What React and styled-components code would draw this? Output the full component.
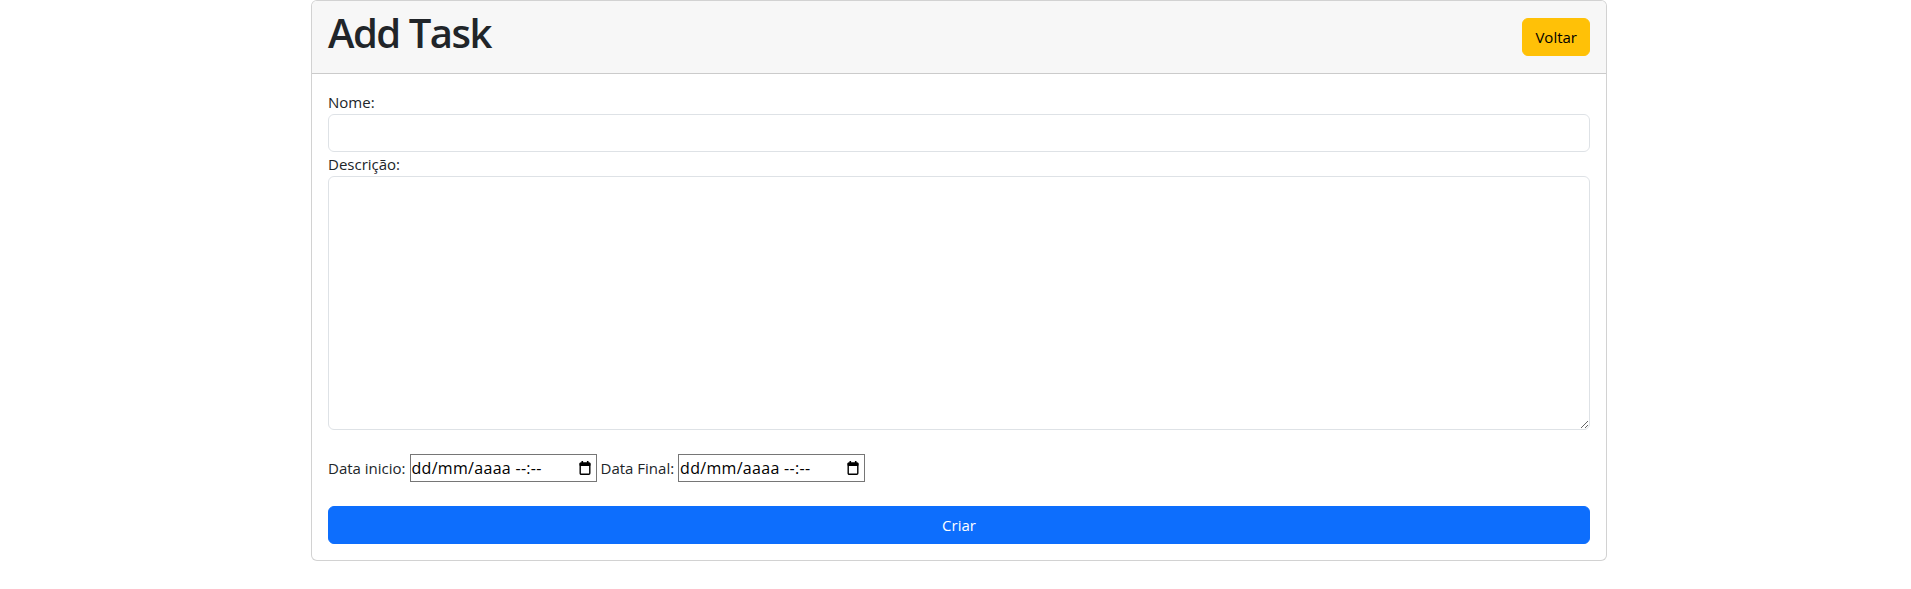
import React from "react"
import styled, { createGlobalStyle } from "styled-components"

const GlobalStyle = createGlobalStyle`
    * { box-sizing: border-box; }
    body {
        margin: 0;
        background: #fff;
        color: #212529;
        font-family: "Open Sans", "Noto Sans", sans-serif;
        font-size: 16px;
        line-height: 1.5;
    }
`

const Page = styled.div`
    display: flex;
    justify-content: center;
    padding-left: 7px;
`

const Card = styled.div`
    width: 1296px;
    border: 1px solid rgba(0, 0, 0, 0.175);
    border-radius: 6px;
    background: #fff;
    overflow: hidden;
`

const CardHeader = styled.div`
    display: flex;
    justify-content: space-between;
    align-items: center;
    padding: 8px 16px;
    background: #f7f7f7;
    border-bottom: 1px solid rgba(0, 0, 0, 0.175);
`

const Title = styled.h1`
    margin: 0 0 8px;
    font-size: 40px;
    font-weight: 600;
    line-height: 48px;
    letter-spacing: -1.5px;
`

const CardBody = styled.form`
    display: flex;
    flex-direction: column;
    padding: 16px;
`

const Label = styled.label`
    display: block;
    font-size: 15px;
    line-height: 24px;
`

const TextInput = styled.input`
    display: block;
    width: 100%;
    height: 38px;
    padding: 6px 12px;
    font: inherit;
    color: #212529;
    border: 1px solid #dee2e6;
    border-radius: 6px;
    outline: none;
`

const TextArea = styled.textarea`
    display: block;
    width: 100%;
    height: 254px;
    padding: 6px 12px;
    font: inherit;
    color: #212529;
    border: 1px solid #dee2e6;
    border-radius: 6px;
    outline: none;
`

const DateRow = styled.div`
    display: flex;
    align-items: center;
    gap: 4px;
    margin-top: 24px;
    font-size: 15px;
    line-height: 24px;
`

const DateBox = styled.div`
    display: flex;
    align-items: center;
    justify-content: space-between;
    width: 187px;
    height: 28px;
    padding: 0 5px 0 1px;
    border: 1px solid #767676;
    color: #000;
    font-size: 16px;
    letter-spacing: 0.3px;
`

const Button = styled.button`
    padding: 6px 12px;
    font: inherit;
    font-size: 15px;
    line-height: 24px;
    border: 1px solid ${p => p.$bg};
    border-radius: 6px;
    background: ${p => p.$bg};
    color: ${p => p.$color};
    width: ${p => (p.$block ? "100%" : "auto")};
    margin-top: ${p => (p.$block ? "24px" : "0")};
    cursor: pointer;
`

function CalendarIcon() {
    return (
        <svg width="12" height="14" viewBox="0 0 12 14">
            <rect x="2.5" y="0" width="1.6" height="2.5" fill="#000" />
            <rect x="7.9" y="0" width="1.6" height="2.5" fill="#000" />
            <rect x="0.5" y="1.5" width="11" height="3.5" rx="1" fill="#000" />
            <rect x="1.2" y="2.2" width="9.6" height="11" rx="1" fill="none" stroke="#000" strokeWidth="1.4" />
        </svg>
    )
}

function DateField() {
    return (
        <DateBox>
            <span>dd/mm/aaaa --:--</span>
            <CalendarIcon />
        </DateBox>
    )
}

export default function App() {
    return (
        <>
            <GlobalStyle />
            <Page>
                <Card>
                    <CardHeader>
                        <Title>Add Task</Title>
                        <Button type="button" $bg="#ffc107" $color="#000">Voltar</Button>
                    </CardHeader>
                    <CardBody onSubmit={e => e.preventDefault()}>
                        <Label htmlFor="nome">Nome:</Label>
                        <TextInput id="nome" type="text" />
                        <Label htmlFor="descricao">Descrição:</Label>
                        <TextArea id="descricao" rows={10} />
                        <DateRow>
                            <span>Data inicio:</span>
                            <DateField />
                            <span>Data Final:</span>
                            <DateField />
                        </DateRow>
                        <Button type="submit" $bg="#0d6efd" $color="#fff" $block>Criar</Button>
                    </CardBody>
                </Card>
            </Page>
        </>
    )
}
